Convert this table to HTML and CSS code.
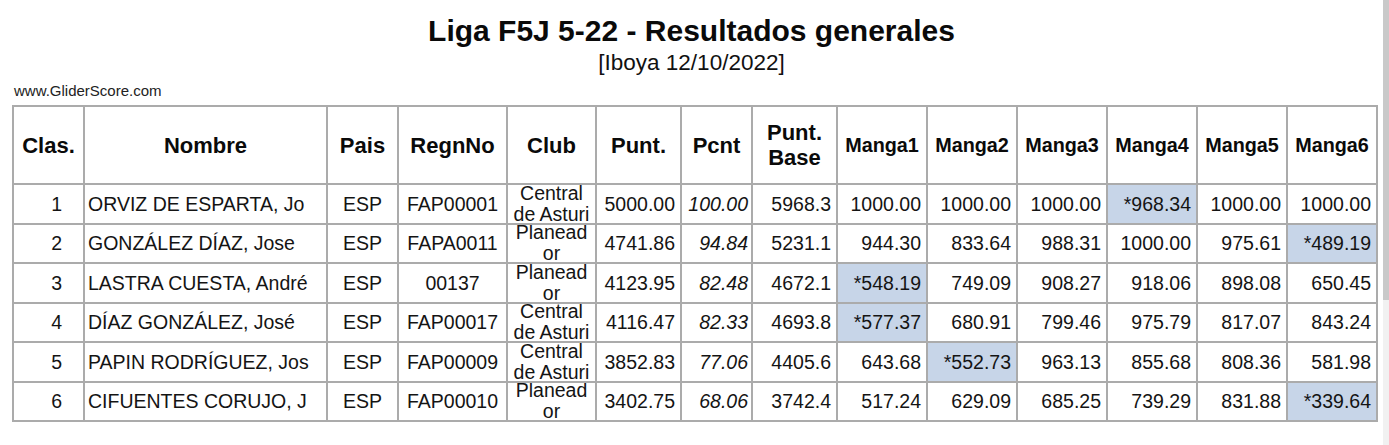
FILE: index.html
```html
<!DOCTYPE html>
<html lang="es">
<head>
<meta charset="utf-8">
<title>Liga F5J 5-22 - Resultados generales</title>
<link rel="stylesheet" href="styles.css">
</head>
<body>
<div class="page">
  <h1 class="title">Liga F5J 5-22 - Resultados generales</h1>
  <p class="subtitle">[Iboya 12/10/2022]</p>
  <p class="site">www.GliderScore.com</p>
  <table class="results">
    <colgroup>
      <col class="w-clas"><col class="w-nombre"><col class="w-pais"><col class="w-regn"><col class="w-club">
      <col class="w-punt"><col class="w-pcnt"><col class="w-base">
      <col class="w-manga"><col class="w-manga"><col class="w-manga"><col class="w-manga"><col class="w-manga"><col class="w-manga">
    </colgroup>
    <thead>
      <tr>
        <th><div class="h">Clas.</div></th>
        <th><div class="h">Nombre</div></th>
        <th><div class="h">Pais</div></th>
        <th><div class="h">RegnNo</div></th>
        <th><div class="h">Club</div></th>
        <th><div class="h">Punt.</div></th>
        <th><div class="h">Pcnt</div></th>
        <th><div class="h">Punt.<br>Base</div></th>
        <th><div class="h sm">Manga1</div></th>
        <th><div class="h sm">Manga2</div></th>
        <th><div class="h sm">Manga3</div></th>
        <th><div class="h sm">Manga4</div></th>
        <th><div class="h sm">Manga5</div></th>
        <th><div class="h sm">Manga6</div></th>
      </tr>
    </thead>
    <tbody>
      <tr>
        <td><div class="c pos">1</div></td>
        <td><div class="c name">ORVIZ DE ESPARTA, Jo</div></td>
        <td><div class="c mid">ESP</div></td>
        <td><div class="c mid">FAP00001</div></td>
        <td><div class="c club">Central de Asturi</div></td>
        <td><div class="c num">5000.00</div></td>
        <td><div class="c num it">100.00</div></td>
        <td><div class="c num">5968.3</div></td>
        <td><div class="c num">1000.00</div></td>
        <td><div class="c num">1000.00</div></td>
        <td><div class="c num">1000.00</div></td>
        <td class="drop"><div class="c num">*968.34</div></td>
        <td><div class="c num">1000.00</div></td>
        <td><div class="c num">1000.00</div></td>
      </tr>
      <tr>
        <td><div class="c pos">2</div></td>
        <td><div class="c name">GONZÁLEZ DÍAZ, Jose</div></td>
        <td><div class="c mid">ESP</div></td>
        <td><div class="c mid">FAPA0011</div></td>
        <td><div class="c club">Planeador</div></td>
        <td><div class="c num">4741.86</div></td>
        <td><div class="c num it">94.84</div></td>
        <td><div class="c num">5231.1</div></td>
        <td><div class="c num">944.30</div></td>
        <td><div class="c num">833.64</div></td>
        <td><div class="c num">988.31</div></td>
        <td><div class="c num">1000.00</div></td>
        <td><div class="c num">975.61</div></td>
        <td class="drop"><div class="c num">*489.19</div></td>
      </tr>
      <tr>
        <td><div class="c pos">3</div></td>
        <td><div class="c name">LASTRA CUESTA, André</div></td>
        <td><div class="c mid">ESP</div></td>
        <td><div class="c mid">00137</div></td>
        <td><div class="c club">Planeador</div></td>
        <td><div class="c num">4123.95</div></td>
        <td><div class="c num it">82.48</div></td>
        <td><div class="c num">4672.1</div></td>
        <td class="drop"><div class="c num">*548.19</div></td>
        <td><div class="c num">749.09</div></td>
        <td><div class="c num">908.27</div></td>
        <td><div class="c num">918.06</div></td>
        <td><div class="c num">898.08</div></td>
        <td><div class="c num">650.45</div></td>
      </tr>
      <tr>
        <td><div class="c pos">4</div></td>
        <td><div class="c name">DÍAZ GONZÁLEZ, José</div></td>
        <td><div class="c mid">ESP</div></td>
        <td><div class="c mid">FAP00017</div></td>
        <td><div class="c club">Central de Asturi</div></td>
        <td><div class="c num">4116.47</div></td>
        <td><div class="c num it">82.33</div></td>
        <td><div class="c num">4693.8</div></td>
        <td class="drop"><div class="c num">*577.37</div></td>
        <td><div class="c num">680.91</div></td>
        <td><div class="c num">799.46</div></td>
        <td><div class="c num">975.79</div></td>
        <td><div class="c num">817.07</div></td>
        <td><div class="c num">843.24</div></td>
      </tr>
      <tr>
        <td><div class="c pos">5</div></td>
        <td><div class="c name">PAPIN RODRÍGUEZ, Jos</div></td>
        <td><div class="c mid">ESP</div></td>
        <td><div class="c mid">FAP00009</div></td>
        <td><div class="c club">Central de Asturi</div></td>
        <td><div class="c num">3852.83</div></td>
        <td><div class="c num it">77.06</div></td>
        <td><div class="c num">4405.6</div></td>
        <td><div class="c num">643.68</div></td>
        <td class="drop"><div class="c num">*552.73</div></td>
        <td><div class="c num">963.13</div></td>
        <td><div class="c num">855.68</div></td>
        <td><div class="c num">808.36</div></td>
        <td><div class="c num">581.98</div></td>
      </tr>
      <tr>
        <td><div class="c pos">6</div></td>
        <td><div class="c name">CIFUENTES CORUJO, J</div></td>
        <td><div class="c mid">ESP</div></td>
        <td><div class="c mid">FAP00010</div></td>
        <td><div class="c club">Planeador</div></td>
        <td><div class="c num">3402.75</div></td>
        <td><div class="c num it">68.06</div></td>
        <td><div class="c num">3742.4</div></td>
        <td><div class="c num">517.24</div></td>
        <td><div class="c num">629.09</div></td>
        <td><div class="c num">685.25</div></td>
        <td><div class="c num">739.29</div></td>
        <td><div class="c num">831.88</div></td>
        <td class="drop"><div class="c num">*339.64</div></td>
      </tr>
    </tbody>
  </table>
</div>
<div class="scrollbar"><div class="thumb"></div></div>
</body>
</html>
```
FILE: styles.css
```css
html, body {
  margin: 0;
  padding: 0;
  background: #ffffff;
}

body {
  display: flex;
  height: 445px;
  overflow: hidden;
  font-family: "Liberation Sans", Arial, sans-serif;
  color: #111111;
}

.page {
  flex: 1;
  padding: 14px 0 0 12px;
  min-width: 0;
}

.title {
  margin: 0;
  text-align: center;
  font-size: 30px;
  line-height: 34px;
  font-weight: bold;
  color: #0a0a0a;
  padding-right: 12px;
}

.subtitle {
  margin: 2px 0 0;
  text-align: center;
  font-size: 22.5px;
  line-height: 26px;
  padding-right: 12px;
}

.site {
  margin: 6px 0 0 2px;
  font-size: 15px;
  line-height: 17px;
  color: #222222;
}

.results {
  margin-top: 6px;
  border-collapse: collapse;
  table-layout: fixed;
  width: 1363px;
}

.w-clas { width: 71px; }
.w-nombre { width: 243px; }
.w-pais { width: 71px; }
.w-regn { width: 109px; }
.w-club { width: 89px; }
.w-punt { width: 85px; }
.w-pcnt { width: 71px; }
.w-base { width: 85px; }
.w-manga { width: 90px; }

.results th,
.results td {
  border: 2px solid #ababab;
  padding: 0;
  vertical-align: middle;
}

.h {
  height: 76px;
  display: flex;
  align-items: center;
  justify-content: center;
  text-align: center;
  font-size: 22px;
  line-height: 25px;
  font-weight: bold;
  color: #0a0a0a;
  overflow: hidden;
}

.h.sm {
  font-size: 19.8px;
}

.c {
  height: 37.5px;
  display: flex;
  align-items: center;
  overflow: hidden;
  font-size: 19.5px;
  line-height: 22px;
  white-space: nowrap;
  color: #141414;
}

.pos {
  justify-content: flex-end;
  padding-right: 21px;
}

.name {
  padding-left: 3px;
}

.mid {
  justify-content: center;
}

.club {
  justify-content: center;
  text-align: center;
  white-space: normal;
  overflow-wrap: anywhere;
  line-height: 21px;
  padding: 0 4px;
}

.num {
  justify-content: flex-end;
  padding-right: 5px;
}

.it {
  font-style: italic;
  padding-right: 3px;
}

.drop {
  background: #c7d5e8;
}

.scrollbar {
  width: 6px;
  flex: none;
  background: #f1f1f1;
}

.thumb {
  height: 300px;
  background: #c9c9c9;
}
```
